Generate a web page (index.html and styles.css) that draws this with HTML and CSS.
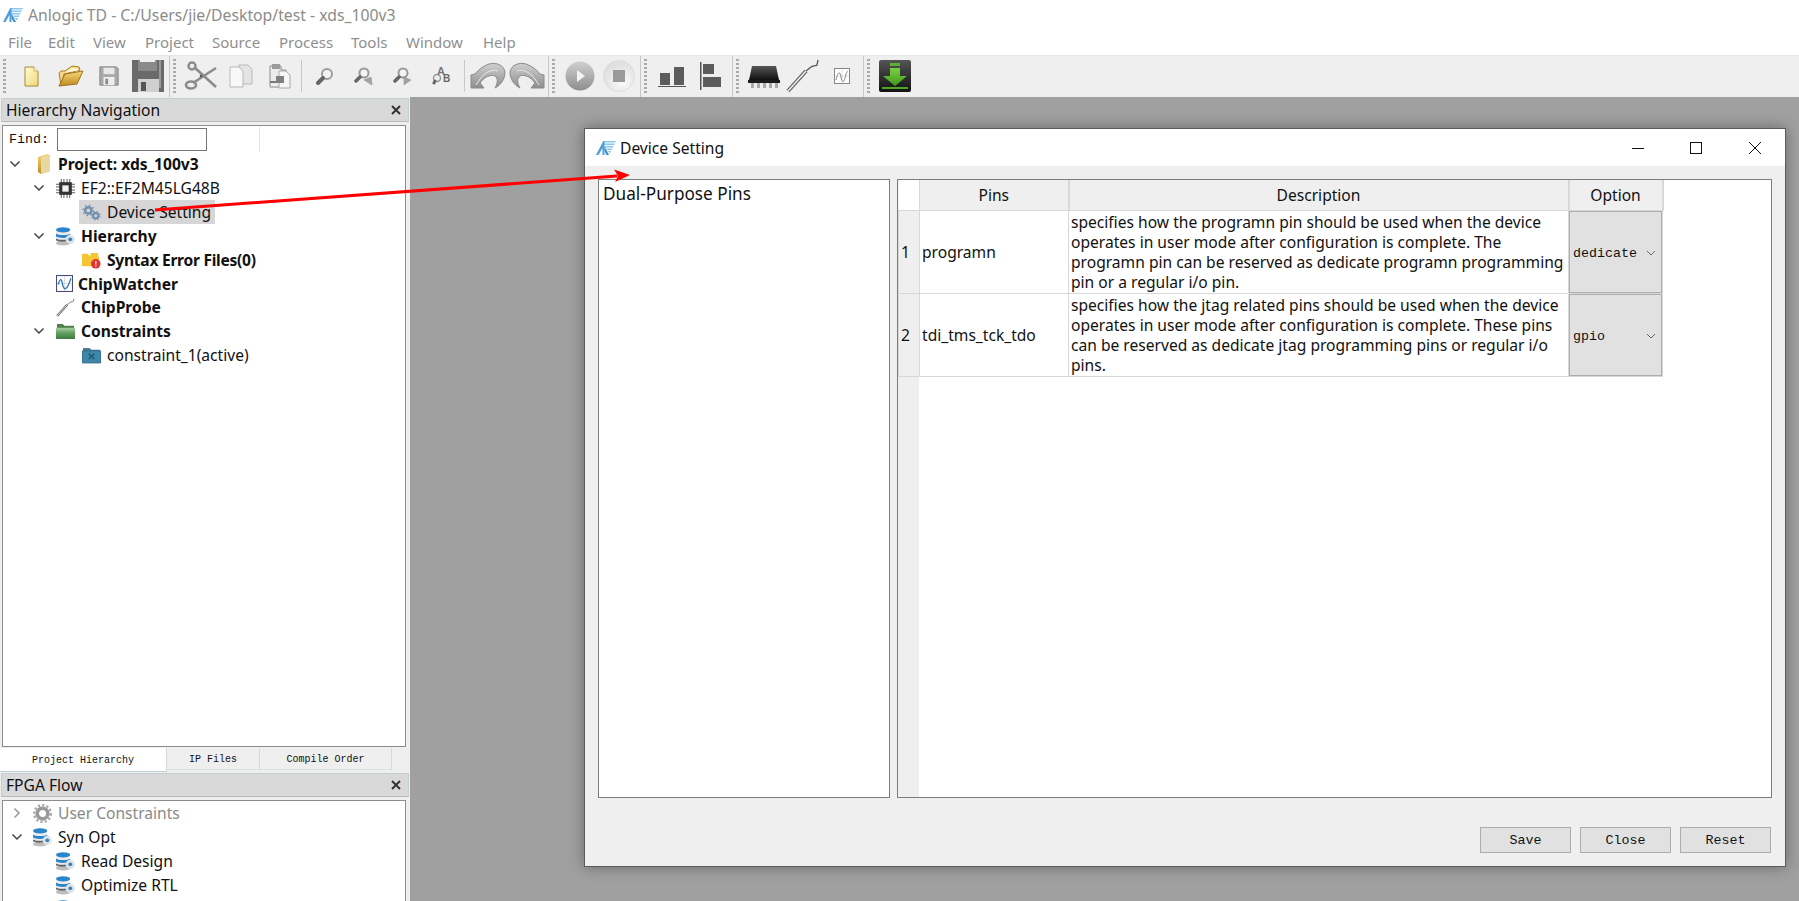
FILE: index.html
```html
<!DOCTYPE html>
<html>
<head>
<meta charset="utf-8">
<title>Anlogic TD - C:/Users/jie/Desktop/test - xds_100v3</title>
<link rel="stylesheet" href="styles.css">
</head>

<body>
<!-- icon sheet -->
<svg class="sheet" width="0" height="0">
	<defs>
		<linearGradient id="gGrey" x1="0" y1="0" x2="0" y2="1"><stop offset="0" stop-color="#d0d0d0"/><stop offset="1" stop-color="#8e8e8e"/></linearGradient>
		<linearGradient id="gDark" x1="0" y1="0" x2="0" y2="1"><stop offset="0" stop-color="#555"/><stop offset="1" stop-color="#111"/></linearGradient>
		<linearGradient id="gYellow" x1="0" y1="0" x2="1" y2="1"><stop offset="0" stop-color="#fffbd8"/><stop offset="1" stop-color="#f0d878"/></linearGradient>
		<linearGradient id="gFolder" x1="0" y1="0" x2="0" y2="1"><stop offset="0" stop-color="#f6d878"/><stop offset="1" stop-color="#c08a20"/></linearGradient>
		<linearGradient id="gGreen" x1="0" y1="0" x2="0" y2="1"><stop offset="0" stop-color="#7cd040"/><stop offset="1" stop-color="#3c9a18"/></linearGradient>
		<linearGradient id="gBox" x1="0" y1="0" x2="0" y2="1"><stop offset="0" stop-color="#a8cfa0"/><stop offset=".5" stop-color="#5f9c5c"/><stop offset="1" stop-color="#3c7a40"/></linearGradient>
		<radialGradient id="gStop" cx=".6" cy=".7" r=".8"><stop offset="0" stop-color="#fafafa"/><stop offset="1" stop-color="#d8d8d8"/></radialGradient>
	</defs>
	<symbol id="logo" viewBox="0 0 20 16">
		<path d="M7 1h13l-.800 1.500H7zM8 3.500h11l-.800 1.500H8zM9 6h8.700l-.800 1.500H9zM10.500 8.500h5.900l-.800 1.500h-4.300zM12 11h3.100l-1.300 2.500z" fill="#8cc8ee"/>
		<path d="M7 1.500 8.500 1 8.500 15H6.500L6.500 8 2.500 15H0z" fill="#4a9fdc"/>
		<path d="M8.500 6 13 15h-2.500L8.500 11z" fill="#3f8fd0"/>
	</symbol>
	<symbol id="tbNew" viewBox="0 0 24 24"><path d="M6 3h9l4 4v15H6z" fill="url(#gYellow)" stroke="#a88a30"/><path d="M15 3v4h4" fill="#fff" stroke="#c8b060"/></symbol>
	<symbol id="tbOpen" viewBox="0 0 28 24"><path d="M5 21 3 9l2-2h4l7-5 7 1 1 3-16 4z" fill="#f4d88a" stroke="#a87c20"/><path d="M8 9 16 4l6 .500v2z" fill="#fff7d8"/><path d="M3 22 9 10 27 7l-6 13z" fill="url(#gFolder)" stroke="#9c7018"/></symbol>
	<symbol id="tbSave" viewBox="0 0 24 24"><path d="M2 2h18l2 2v18H2z" fill="#a8a8a8" stroke="#888"/><rect x="6" y="3" width="12" height="7" fill="#e8e8e8"/><rect x="6" y="13" width="12" height="9" fill="#eee"/><rect x="8" y="15" width="3" height="6" fill="#888"/></symbol>
	<symbol id="tbSaveBig" viewBox="0 0 32 32"><path d="M0 0h32v32H0z" fill="#6a6a6a"/><rect x="6" y="0" width="19" height="11" fill="#8a8a8a"/><rect x="8" y="0" width="15" height="2" fill="#efefef"/><rect x="27" y="0" width="2" height="28" fill="#9a9a9a"/><rect x="6" y="19" width="21" height="13" fill="#d0d0d0"/><rect x="9" y="22" width="5" height="9" fill="#555"/></symbol>
	<symbol id="tbCut" viewBox="0 0 34 30"><g fill="none" stroke="#8c8c8c"><path d="M10 6 32 26" stroke-width="2.600"/><path d="M9 22 32 7" stroke-width="2.600"/><circle cx="8" cy="5" r="3.500" stroke-width="2.400"/><ellipse cx="7" cy="24" rx="5" ry="3.500" stroke-width="2.600"/></g><circle cx="17" cy="15" r="1.300" fill="#555"/></symbol>
	<symbol id="tbCopy" viewBox="0 0 26 26"><path d="M12 2h9l4 4v15H12z" fill="#e4e4e4" stroke="#b8b8b8"/><path d="M3 4h9l4 4v16H3z" fill="#f8f8f8" stroke="#b8b8b8"/></symbol>
	<symbol id="tbPaste" viewBox="0 0 26 26"><path d="M4 3h11v4h5v17H4z" fill="#ececec" stroke="#8c8c8c"/><rect x="6" y="1" width="8" height="5" fill="#9a9a9a"/><path d="M13 8h7l4 4v13H13z" fill="#f6f6f6" stroke="#aaa"/><rect x="10" y="13" width="8" height="7" fill="#808080"/><path d="M4 19h6" stroke="#777" stroke-width="2"/></symbol>
	<symbol id="tbFind" viewBox="0 0 20 20"><circle cx="12" cy="8" r="5" fill="#f4f4f4" stroke="#9c9c9c" stroke-width="2"/><path d="M8 12 3 17" stroke="#666" stroke-width="4" stroke-linecap="round"/></symbol>
	<symbol id="tbPrev" viewBox="0 0 20 20"><circle cx="10" cy="7" r="4.500" fill="#f4f4f4" stroke="#999" stroke-width="2"/><path d="M6 11 2 15" stroke="#666" stroke-width="3.500" stroke-linecap="round"/><path d="M18 19 10 14l7-3z" fill="#a4a4a4" stroke="#888" stroke-width=".5"/></symbol>
	<symbol id="tbNext" viewBox="0 0 20 20"><circle cx="10" cy="7" r="4.500" fill="#f4f4f4" stroke="#999" stroke-width="2"/><path d="M6 11 2 15" stroke="#666" stroke-width="3.500" stroke-linecap="round"/><path d="M11 11l7 3-7 5z" fill="#a4a4a4" stroke="#888" stroke-width=".5"/></symbol>
	<symbol id="tbUndo" viewBox="0 0 36 28"><path d="M1 13V26H14L10 21C14 15 21 12 25 14 28 16 28 21 25 26 31 23 35 17 35 10 34 3 26 0 19 2 13 4 8 8 5 12z" fill="url(#gGrey)" stroke="#8a8a8a"/><path d="M6 23 10 17C15 10 22 7 28 9" fill="none" stroke="#e8e8e8"/></symbol>
	<symbol id="tbRedo" viewBox="0 0 36 28"><path d="M35 13V26H22L26 21C22 15 15 12 11 14 8 16 8 21 11 26 5 23 1 17 1 10 2 3 10 0 17 2 23 4 28 8 31 12z" fill="url(#gGrey)" stroke="#8a8a8a"/><path d="M30 23 26 17C21 10 14 7 8 9" fill="none" stroke="#e8e8e8"/></symbol>
	<symbol id="tbPlay" viewBox="0 0 30 30"><circle cx="15" cy="15" r="14.500" fill="url(#gGrey)"/><path d="M12 9 20 15 12 21z" fill="#f4f4f4"/></symbol>
	<symbol id="tbStop" viewBox="0 0 32 32"><circle cx="16" cy="16" r="15.500" fill="url(#gStop)" stroke="#ddd"/><rect x="10" y="10" width="12" height="12" fill="#999"/></symbol>
	<symbol id="tbBars" viewBox="0 0 30 24"><rect x="3" y="9" width="10" height="12" fill="#5c5c5c"/><rect x="17" y="3" width="10" height="18" fill="#5c5c5c"/><rect x="1" y="22" width="28" height="1" fill="#555"/></symbol>
	<symbol id="tbAlign" viewBox="0 0 24 30"><rect x="1" y="1" width="1.500" height="28" fill="#555"/><rect x="4" y="3" width="11" height="10" fill="#5c5c5c"/><rect x="4" y="16" width="18" height="10" fill="#5c5c5c"/></symbol>
	<symbol id="tbChip" viewBox="0 0 32 26"><path d="M1 17 4 3h24l3 14z" fill="url(#gDark)"/><rect x="0" y="17" width="32" height="3" fill="#1c1c1c"/><g fill="#aaa"><rect x="3" y="20" width="3" height="5"/><rect x="9" y="20" width="3" height="5"/><rect x="15" y="20" width="3" height="5"/><rect x="21" y="20" width="3" height="5"/><rect x="27" y="20" width="3" height="5"/></g></symbol>
	<symbol id="probe" viewBox="0 0 34 34"><path d="M2 32 20 12" stroke="#666" stroke-width="4"/><path d="M2 32 20 12" stroke="#eee" stroke-width="1.500"/><path d="M20 12 25 8c3-2 5-1 6-2l1-5" fill="none" stroke="#555" stroke-width="1.300"/></symbol>
	<symbol id="wave" viewBox="0 0 16 16"><rect x=".5" y=".5" width="15" height="15" fill="#fff" stroke="#888"/><path d="M1 8h14M8 1v14" stroke="#ccc" stroke-width=".6"/><path d="M2 12C4 3 6 3 7 9s3 6 4 1 2-6 3-7" fill="none" stroke="#888"/></symbol>
	<symbol id="waveColor" viewBox="0 0 16 16"><rect x=".5" y=".5" width="15" height="15" fill="#fff" stroke="#4c4a78"/><path d="M1 8h14M8 1v14" stroke="#ccc" stroke-width=".6"/><path d="M2 9C4 3 5 3 6 8s2 6 4 4 3-6 4-9" fill="none" stroke="#2a78c8" stroke-width="1.200"/></symbol>
	<symbol id="tbLoad" viewBox="0 0 32 32"><rect width="32" height="32" rx="2" fill="url(#gDark)"/><rect x="11" y="3" width="10" height="3" fill="#5cb030"/><path d="M11 8h10v8h7L16 26 4 16h7z" fill="url(#gGreen)"/><rect x="3" y="27" width="26" height="2" fill="#4ca824"/></symbol>
	<symbol id="chev" viewBox="0 0 12 12"><path d="M1.500 3.500 6 8l4.500-4.500" fill="none" stroke="#444" stroke-width="1.500"/></symbol>
	<symbol id="chevR" viewBox="0 0 12 12"><path d="M3.500 1.500 8 6l-4.500 4.500" fill="none" stroke="#999" stroke-width="1.500"/></symbol>
	<symbol id="proj" viewBox="0 0 14 20"><path d="M1 3 10 0 13 1V17L4 20 1 18z" fill="url(#gFolder)"/><path d="M4 3 13 1V17L4 20z" fill="#e8d7a0"/></symbol>
	<symbol id="chip" viewBox="0 0 18 18"><path d="M0 5h18M0 7.500h18M0 10.500h18M0 13h18M5 0v18M7.500 0v18M10.500 0v18M13 0v18" stroke="#555" stroke-width=".9"/><rect x="3" y="3" width="12" height="12" fill="#333"/><rect x="6" y="6" width="6" height="6" fill="#f2f2f2"/></symbol>
	<symbol id="gears" viewBox="0 0 18 16"><g fill="none" stroke="#6e8fb0"><circle cx="6" cy="6" r="3" stroke-width="2.400"/><circle cx="6" cy="6" r="5" stroke-width="1.200" stroke-dasharray="1.600 2.300"/><circle cx="13" cy="11" r="2.400" stroke-width="2"/><circle cx="13" cy="11" r="4" stroke-width="1.100" stroke-dasharray="1.500 1.700"/></g></symbol>
	<symbol id="db" viewBox="0 0 20 20"><rect x="0" y="3" width="15" height="14" fill="#ececec"/><ellipse cx="7.500" cy="17" rx="7.500" ry="2.500" fill="#bdbdbd"/><path d="M0 7c2 2 13 2 15 0v3c-2 2-13 2-15 0z" fill="#2a86cc"/><path d="M0 12c2 2 11 2 13 0v2c-2 2-11 2-13 0z" fill="#666"/><ellipse cx="7.500" cy="3" rx="7.500" ry="2.800" fill="#2a86cc"/><circle cx="15" cy="13" r="4.800" fill="#e2e2e2"/><circle cx="15" cy="13" r="2" fill="#2a86cc"/></symbol>
	<symbol id="errFolder" viewBox="0 0 20 18"><path d="M0 2h6l2 2h1V1h8v4h1v10H0z" fill="#f6c533"/><circle cx="14.500" cy="12.500" r="5" fill="#e23232"/><rect x="14" y="9.500" width="1.200" height="4" fill="#fff"/><rect x="14" y="14.300" width="1.200" height="1.300" fill="#fff"/></symbol>
	<symbol id="cons" viewBox="0 0 20 18"><path d="M1 1h6l2 2h10v4H1z" fill="#4f7f48"/><rect x="0" y="5" width="20" height="12" rx="1" fill="url(#gBox)"/></symbol>
	<symbol id="consFolder" viewBox="0 0 20 18"><path d="M1 1h7l2 2h9v3H1z" fill="#4a7f98"/><rect x="0" y="4" width="20" height="13" rx="1" fill="#3f86a8" stroke="#24566e" stroke-width=".6"/><path d="M7 7l6 6M13 7l-6 6" stroke="#1f5c78" stroke-width="1.600"/></symbol>
	<symbol id="gearGrey" viewBox="0 0 16 16"><circle cx="8" cy="8" r="4.500" fill="none" stroke="#999" stroke-width="3"/><circle cx="8" cy="8" r="7" fill="none" stroke="#aaa" stroke-width="2" stroke-dasharray="2 1.600"/></symbol>
	<symbol id="dockX" viewBox="0 0 12 12"><path d="M2 2l8 8M10 2l-8 8" stroke="#333" stroke-width="2"/></symbol>
</svg>

<div class="titlebar">
	<svg class="logo_main"><use href="#logo"/></svg>
	<span>Anlogic TD - C:/Users/jie/Desktop/test - xds_100v3</span>
</div>
<div class="menubar">
	<span class="m_file">File</span><span class="m_edit">Edit</span><span class="m_view">View</span><span class="m_project">Project</span><span class="m_source">Source</span><span class="m_process">Process</span><span class="m_tools">Tools</span><span class="m_window">Window</span><span>Help</span>
</div>
<div class="toolbar">
	<div class="tb_group">
		<i class="grip"></i>
		<span class="tb_btn"><svg width="24" height="24"><use href="#tbNew"/></svg></span>
		<span class="tb_btn"><svg width="28" height="24"><use href="#tbOpen"/></svg></span>
		<span class="tb_btn"><svg width="22" height="22"><use href="#tbSave"/></svg></span>
		<span class="tb_btn"><svg width="32" height="32"><use href="#tbSaveBig"/></svg></span>
	</div>
	<div class="tb_group">
		<i class="grip"></i>
		<span class="tb_btn"><svg width="34" height="30"><use href="#tbCut"/></svg></span>
		<span class="tb_btn"><svg width="26" height="26"><use href="#tbCopy"/></svg></span>
		<span class="tb_btn"><svg width="26" height="26"><use href="#tbPaste"/></svg></span>
		<i class="tb_sep"></i>
		<span class="tb_btn"><svg width="20" height="20"><use href="#tbFind"/></svg></span>
		<span class="tb_btn"><svg width="20" height="20"><use href="#tbPrev"/></svg></span>
		<span class="tb_btn"><svg width="20" height="20"><use href="#tbNext"/></svg></span>
		<span class="tb_btn"><svg width="20" height="22"><circle cx="5" cy="13" r="3.500" fill="#eee" stroke="#999" stroke-width="1.500"/><path d="M3 16 2 18" stroke="#666" stroke-width="3" stroke-linecap="round"/><text x="5" y="10" font-family="Liberation Sans" font-size="11" font-weight="700" fill="#777">A</text><text x="11" y="17" font-family="Liberation Sans" font-size="10" font-weight="700" fill="#666">B</text></svg></span>
		<i class="tb_sep"></i>
		<span class="tb_btn"><svg width="36" height="28"><use href="#tbUndo"/></svg></span>
		<span class="tb_btn"><svg width="36" height="28"><use href="#tbRedo"/></svg></span>
	</div>
	<div class="tb_group">
		<i class="grip"></i>
		<span class="tb_btn"><svg width="30" height="30"><use href="#tbPlay"/></svg></span>
		<span class="tb_btn"><svg width="32" height="32"><use href="#tbStop"/></svg></span>
	</div>
	<div class="tb_group">
		<i class="grip"></i>
		<span class="tb_btn"><svg width="30" height="24"><use href="#tbBars"/></svg></span>
		<span class="tb_btn"><svg width="24" height="30"><use href="#tbAlign"/></svg></span>
	</div>
	<div class="tb_group">
		<i class="grip"></i>
		<span class="tb_btn"><svg width="32" height="26"><use href="#tbChip"/></svg></span>
		<span class="tb_btn"><svg width="34" height="34"><use href="#probe"/></svg></span>
		<span class="tb_btn"><svg width="16" height="16"><use href="#wave"/></svg></span>
	</div>
	<div class="tb_group tb_last">
		<i class="grip"></i>
		<span class="tb_btn"><svg width="32" height="32"><use href="#tbLoad"/></svg></span>
	</div>
</div>

<div class="main">
	<div class="docks">
		<div class="dock_head"><span>Hierarchy Navigation</span><svg class="dock_close"><use href="#dockX"/></svg></div>
		<div class="dock_body">
			<div class="find_row">
				<label>Find:</label><span class="find_input"></span><i class="find_line"></i>
			</div>
			<div class="row lv0 bold"><svg class="chev"><use href="#chev"/></svg><svg class="ic_proj"><use href="#proj"/></svg><span>Project: xds_100v3</span></div>
			<div class="row lv1"><svg class="chev"><use href="#chev"/></svg><svg class="ic"><use href="#chip"/></svg><span>EF2::EF2M45LG48B</span></div>
			<div class="row lv2"><div class="selected"><svg class="ic"><use href="#gears"/></svg><span>Device Setting</span></div></div>
			<div class="row lv1 bold"><svg class="chev"><use href="#chev"/></svg><svg class="ic"><use href="#db"/></svg><span>Hierarchy</span></div>
			<div class="row lv2 bold"><svg class="ic"><use href="#errFolder"/></svg><span class="tight">Syntax Error Files(0)</span></div>
			<div class="row row_short lv1b bold"><svg class="ic_s"><use href="#waveColor"/></svg><span>ChipWatcher</span></div>
			<div class="row lv1b bold"><svg class="ic_p"><use href="#probe"/></svg><span>ChipProbe</span></div>
			<div class="row lv1 bold"><svg class="chev"><use href="#chev"/></svg><svg class="ic"><use href="#cons"/></svg><span>Constraints</span></div>
			<div class="row lv2"><svg class="ic"><use href="#consFolder"/></svg><span>constraint_1(active)</span></div>
		</div>
		<div class="tabs">
			<span class="tab tab_on">Project Hierarchy</span>
			<span class="tab tab_ip">IP Files</span>
			<span class="tab tab_order">Compile Order</span>
		</div>
		<div class="dock_head"><span>FPGA Flow</span><svg class="dock_close"><use href="#dockX"/></svg></div>
		<div class="dock_body flow_body">
			<div class="row fl0 off"><svg class="chev"><use href="#chevR"/></svg><svg class="ic"><use href="#gearGrey"/></svg><span>User Constraints</span></div>
			<div class="row fl0"><svg class="chev"><use href="#chev"/></svg><svg class="ic"><use href="#db"/></svg><span>Syn Opt</span></div>
			<div class="row fl1"><svg class="ic"><use href="#db"/></svg><span>Read Design</span></div>
			<div class="row fl1"><svg class="ic"><use href="#db"/></svg><span>Optimize RTL</span></div>
			<div class="row fl1"><svg class="ic"><use href="#db"/></svg></div>
		</div>
	</div>
	<div class="desktop"></div>
</div>

<div class="dialog">
	<div class="dlg_title">
		<svg class="logo_dlg"><use href="#logo"/></svg>
		<span class="dlg_name">Device Setting</span>
		<span class="win_btn"><svg width="14" height="14"><path d="M1 7.500h12" stroke="#111"/></svg></span>
		<span class="win_btn"><svg width="14" height="14"><rect x="1.500" y="1.500" width="11" height="11" fill="none" stroke="#111"/></svg></span>
		<span class="win_btn"><svg width="14" height="14"><path d="M1 1l12 12M13 1 1 13" stroke="#111"/></svg></span>
	</div>
	<div class="dlg_body">
		<div class="dlg_panes">
			<div class="pane_list">Dual-Purpose Pins</div>
			<div class="pane_table">
				<table class="pins">
					<colgroup><col class="c_num"><col class="c_pin"><col class="c_desc"><col class="c_opt"></colgroup>
					<thead>
						<tr><th class="corner"></th><th>Pins</th><th>Description</th><th>Option</th></tr>
					</thead>
					<tbody>
						<tr>
							<td class="num">1</td>
							<td class="pin">programn</td>
							<td class="desc">specifies how the programn pin should be used when the device<br>operates in user mode after configuration is complete. The<br>programn pin can be reserved as dedicate programn programming<br>pin or a regular i/o pin.</td>
							<td class="opt"><div class="combo"><span>dedicate</span><svg width="12" height="12"><path d="M2 4l4 4 4-4" fill="none" stroke="#666"/></svg></div></td>
						</tr>
						<tr>
							<td class="num">2</td>
							<td class="pin">tdi_tms_tck_tdo</td>
							<td class="desc">specifies how the jtag related pins should be used when the device<br>operates in user mode after configuration is complete. These pins<br>can be reserved as dedicate jtag programming pins or regular i/o<br>pins.</td>
							<td class="opt"><div class="combo"><span>gpio</span><svg width="12" height="12"><path d="M2 4l4 4 4-4" fill="none" stroke="#666"/></svg></div></td>
						</tr>
					</tbody>
				</table>
			</div>
		</div>
		<div class="dlg_btns">
			<button>Save</button><button>Close</button><button>Reset</button>
		</div>
	</div>
</div>

<!-- red annotation arrow -->
<svg class="arrow" width="1799" height="901">
	<path d="M155 210 617 176" stroke="#f00" stroke-width="3"/>
	<path d="M630 175 614 169.500 618 176 615 182z" fill="#f00"/>
</svg>
</body>

</html>
```

FILE: styles.css
```css
html,body{margin: 0;padding: 0;height: 901px;overflow: hidden;}
body{background-color: #fff;color: #111;font: 15.600px "Noto Sans","Noto Sans CJK SC",sans-serif;}
.sheet{position: absolute;}
svg{display: block;flex: none;}

.titlebar{display: flex;align-items: center;height: 29px;padding-left: 3px;color: #8b8b8b;font-size: 15.750px;}
.logo_main{width: 20px;height: 16px;margin-right: 5px;}
.menubar{display: flex;height: 26px;align-items: center;padding-left: 8px;color: #8f8f8f;font-size: 15px;}
.m_file{width: 40px;}
.m_edit{width: 45px;}
.m_view{width: 52px;}
.m_project{width: 67px;}
.m_source{width: 67px;}
.m_process{width: 72px;}
.m_tools{width: 55px;}
.m_window{width: 77px;}

.toolbar{display: flex;height: 41px;border-top: 1px solid #e6e6e6;background-color: #efefef;}
.tb_group{display: flex;align-items: center;padding: 0 2px 1px;border-right: 1px solid #c8c8c8;}
.tb_last{border-right: 0;}
.grip{width: 3px;height: 34px;margin: 0 5px 0 1px;background: repeating-linear-gradient(#aaa 0 2px,transparent 2px 4px);}
.tb_btn{display: flex;align-items: center;justify-content: center;width: 39px;}
.tb_sep{width: 1px;height: 32px;margin: 0 3px;background-color: #c8c8c8;}

.main{display: flex;height: 804px;}
.docks{display: flex;flex-direction: column;width: 410px;height: 804px;overflow: hidden;background-color: #efefef;}
.desktop{flex: 1;background-color: #a0a0a0;}
.dock_head{display: flex;align-items: center;justify-content: space-between;flex: none;height: 22px;margin: 1px 1px 0;padding: 0 6px 0 4px;background-color: #d9d9d9;border: 1px solid #c3d0d3;border-bottom-color: #b8b8b8;}
.dock_close{width: 12px;height: 12px;}
.dock_body{flex: none;box-sizing: border-box;width: 404px;height: 622px;margin: 3px 0 0 2px;background-color: #fff;border: 1px solid #8c8c8c;}
.flow_body{height: 120px;}

.find_row{display: flex;align-items: center;height: 26px;font: 13.330px "Liberation Mono",monospace;padding-left: 6px;}
.find_input{box-sizing: border-box;width: 150px;height: 23px;margin-left: 8px;border: 1px solid #777;}
.find_line{width: 1px;height: 25px;margin-left: 52px;background-color: #e4e4e4;}

.row{display: flex;align-items: center;height: 24px;white-space: nowrap;}
.row_short{height: 23px;}
.bold{font-weight: 700;}
.tight{letter-spacing: -.27px;}
.chev{width: 12px;height: 12px;}
.ic{width: 19px;height: 19px;margin-right: 6px;}
.ic_s{width: 17px;height: 17px;margin-right: 5px;}
.ic_p{width: 19px;height: 19px;margin-right: 6px;}
.ic_proj{width: 14px;height: 20px;margin: 0 7px 0 16px;}
.lv0{padding-left: 6px;}
.lv1{padding-left: 30px;}
.lv1 .chev{margin-right: 11px;}
.lv1b{padding-left: 53px;}
.lv2{padding-left: 79px;}
.selected{display: flex;align-items: center;height: 24px;padding: 0 4px 0 3px;margin-left: -3px;background-color: #d6d6d6;}
.off{color: #8a8a8a;}
.fl0{padding-left: 8px;}
.fl0 .chev{margin-right: 10px;}
.fl1{padding-left: 53px;}

.tabs{display: flex;flex: none;height: 24px;margin-top: 1px;font: 10px "Liberation Mono",monospace;}
.tab{display: flex;align-items: center;justify-content: center;box-sizing: border-box;height: 22px;padding-top: 2px;border-right: 1px solid #d8d8d8;}
.tab_on{width: 167px;height: 24px;background-color: #fff;border-bottom: 1px solid #c3d0d3;}
.tab_ip{width: 93px;border-bottom: 1px solid #e0e0e0;}
.tab_order{width: 132px;border-bottom: 1px solid #e0e0e0;}

.dialog{position: absolute;left: 584px;top: 128px;display: flex;flex-direction: column;box-sizing: border-box;width: 1202px;height: 739px;background-color: #efefef;border: 1px solid #5a5a5a;box-shadow: 0 0 14px rgba(0,0,0,.35);}
.dlg_title{display: flex;align-items: center;flex: none;height: 37px;padding-left: 11px;background-color: #fff;}
.logo_dlg{width: 20px;height: 16px;margin-right: 4px;}
.dlg_name{flex: 1;}
.win_btn{display: flex;justify-content: center;width: 58.500px;position: relative;left: -1px;}
.dlg_body{flex: 1;display: flex;flex-direction: column;padding: 13px 13px 13px;}
.dlg_panes{display: flex;gap: 7px;height: 619px;}
.pane_list{box-sizing: border-box;width: 292px;padding: 2px 4px;background-color: #fff;border: 1px solid #7c7c7c;font-size: 17.200px;}
.pane_table{flex: 1;box-sizing: border-box;background: linear-gradient(to right,#efefef 21px,#fff 21px);border: 1px solid #7c7c7c;}

.pins{table-layout: fixed;width: 764px;border-collapse: collapse;}
.c_num{width: 21px;}
.c_pin{width: 149px;}
.c_desc{width: 500px;}
.c_opt{width: 94px;}
.pins th{height: 30px;padding: 0;font-weight: 400;background-color: #efefef;border: 1px solid #d8d8d8;border-top: 0;border-right-width: 2px;}
.pins .corner{background-color: #fff;border: 0;}
.pins td{padding: 0;border: 1px solid #d8d8d8;background-color: #fff;}
.pins td.num{padding-left: 2px;background-color: #efefef;}
.pins td.pin{padding-left: 2px;}
.pins td.desc{height: 82px;padding-left: 2px;line-height: 20px;white-space: nowrap;}
.combo{display: flex;align-items: center;justify-content: space-between;box-sizing: border-box;height: 82px;padding: 2px 4px 0 3px;background-color: #e1e1e1;border: 1px solid #adadad;font: 13.330px "Liberation Mono",monospace;}

.dlg_btns{display: flex;justify-content: flex-end;gap: 9px;margin-top: 29px;padding-right: 1px;}
.dlg_btns button{box-sizing: border-box;width: 91px;height: 26px;padding: 0;background-color: #e1e1e1;border: 1px solid #adadad;color: #111;font: 13.330px "Liberation Mono",monospace;}

.arrow{position: absolute;left: 0;top: 0;pointer-events: none;}
```
